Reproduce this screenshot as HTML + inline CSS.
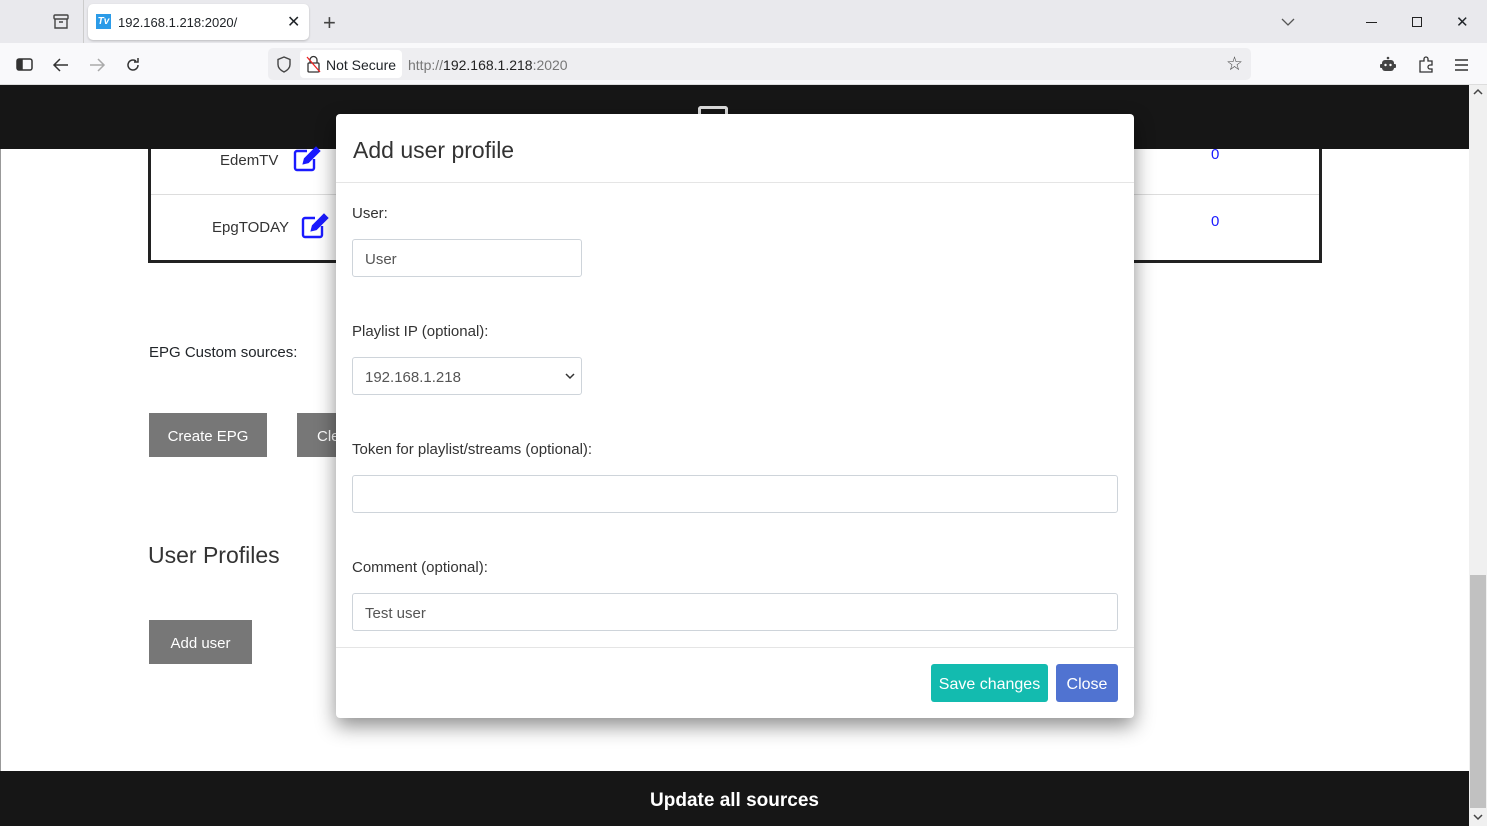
<!DOCTYPE html>
<html><head><meta charset="utf-8"><style>
*{box-sizing:border-box;margin:0;padding:0}
body{width:1487px;height:826px;overflow:hidden;position:relative;font-family:"Liberation Sans",sans-serif;background:#fff;color:#212529}
.abs{position:absolute}
.tabbar{left:0;top:0;width:1487px;height:43px;background:#e9e9ed}
.tab{left:88px;top:4px;width:221px;height:36px;background:#fff;border-radius:5px;box-shadow:0 1px 2px rgba(0,0,0,.2)}
.toolbar{left:0;top:43px;width:1487px;height:42px;background:#f9f9fb;border-bottom:1px solid #ddd}
.url{left:268px;top:48px;width:983px;height:32px;background:#eeeef1;border-radius:5px}
.ns{left:300px;top:50px;width:102px;height:28px;background:#fff;border-radius:4px}
.nav{left:0;top:85px;width:1469px;height:64px;background:#161616}
.foot{left:0;top:771px;width:1469px;height:55px;background:#161616;color:#fff;font-weight:bold;font-size:19px;text-align:center;line-height:60px}
.sb{left:1469px;top:85px;width:18px;height:741px;background:#f0f0f0}
.thumb{left:1470px;top:575px;width:16px;height:233px;background:#c1c1c1}
.modal{left:336px;top:114px;width:798px;height:604px;background:#fff;border-radius:4px;box-shadow:0 8px 20px rgba(0,0,0,.45)}
.lbl{font-size:15px;color:#333}
.inp{border:1px solid #ced4da;border-radius:3px;height:38px;font-size:15px;color:#555;padding:0 12px;line-height:40px}
.btn{color:#fff;font-size:16px;text-align:center}
</style></head><body>
<div class="abs tabbar"></div>
<svg class="abs" style="left:52px;top:13px" width="18" height="18" viewBox="0 0 18 18" fill="none" stroke="#444" stroke-width="1.4"><rect x="2" y="2" width="14" height="4" rx="1"/><path d="M3 6v9h12V6M7 9h4"/></svg>
<div class="abs" style="left:83px;top:0;width:1px;height:43px;background:#ccc"></div>
<div class="abs tab"></div>
<div class="abs" style="left:96px;top:14px;width:15px;height:15px;background:#2b9be8;color:#fff;font-size:10px;font-style:italic;font-weight:bold;text-align:center;line-height:15px">Tv</div>
<div class="abs" style="left:118px;top:15px;font-size:13px">192.168.1.218:2020/</div>
<div class="abs" style="left:287px;top:12px;font-size:16px">✕</div>
<div class="abs" style="left:323px;top:10px;font-size:22px;color:#444;font-weight:300">+</div>
<svg class="abs" style="left:1280px;top:16px" width="16" height="12"><path d="M2 3l6 6 6-6" stroke="#555" fill="none" stroke-width="1.3"/></svg>
<div class="abs" style="left:1366px;top:22px;width:11px;height:1px;background:#222"></div>
<div class="abs" style="left:1412px;top:17px;width:10px;height:10px;border:1px solid #222"></div>
<div class="abs" style="left:1456px;top:13px;font-size:15px">✕</div>
<div class="abs toolbar"></div>
<svg class="abs" style="left:16px;top:57px" width="18" height="16" fill="none" stroke="#333" stroke-width="1.5"><rect x="1" y="2" width="15" height="11" rx="2"/><rect x="2" y="3" width="4" height="9" fill="#333"/></svg>
<svg class="abs" style="left:52px;top:57px" width="18" height="16" fill="none" stroke="#333" stroke-width="1.5"><path d="M16 8H2M8 2L2 8l6 6"/></svg>
<svg class="abs" style="left:88px;top:57px" width="18" height="16" fill="none" stroke="#aaa" stroke-width="1.5"><path d="M2 8h14M10 2l6 6-6 6"/></svg>
<svg class="abs" style="left:124px;top:56px" width="18" height="18" fill="none" stroke="#333" stroke-width="1.5"><path d="M14 9a5 5 0 1 1-2-4M14 2v4h-4"/></svg>
<div class="abs url"></div>
<svg class="abs" style="left:276px;top:56px" width="16" height="17" fill="none" stroke="#444" stroke-width="1.4"><path d="M8 1L2 3.5v5C2 12 5 14.5 8 16c3-1.5 6-4 6-7.5v-5z"/></svg>
<div class="abs ns"></div>
<svg class="abs" style="left:306px;top:55px" width="15" height="18" fill="none" stroke="#333" stroke-width="1.3"><rect x="2" y="8" width="11" height="9" rx="1"/><path d="M4 8V5a3.5 3.5 0 0 1 7 0v3"/><path d="M1 2l13 15" stroke="#e22"/></svg>
<div class="abs" style="left:326px;top:57px;font-size:14px">Not Secure</div>
<div class="abs" style="left:408px;top:57px;font-size:14px;color:#777">http://<span style="color:#222">192.168.1.218</span>:2020</div>
<div class="abs" style="left:1226px;top:53px;font-size:19px;color:#444">☆</div>
<svg class="abs" style="left:1379px;top:56px" width="18" height="17"><circle cx="9" cy="2" r="1.3" fill="#444"/><rect x="3" y="4" width="12" height="11" rx="3" fill="#444"/><rect x="1" y="8" width="16" height="4" rx="1" fill="#444"/><circle cx="6.5" cy="9" r="1.2" fill="#fff"/><circle cx="11.5" cy="9" r="1.2" fill="#fff"/></svg>
<svg class="abs" style="left:1418px;top:55px" width="18" height="18" fill="none" stroke="#333" stroke-width="1.3"><path d="M2 6h4V4a2 2 0 0 1 4 0v2h4v4h-2a2 2 0 0 0 0 4h2v3H2z"/></svg>
<svg class="abs" style="left:1454px;top:58px" width="16" height="14" stroke="#333" stroke-width="1.4"><path d="M1 2h13M1 7h13M1 12h13"/></svg>

<div class="abs nav"></div>
<div class="abs" style="left:0;top:149px;width:1px;height:622px;background:#999"></div>
<div class="abs" style="left:698px;top:106px;width:30px;height:10px;border:3px solid #ddd;border-bottom:none;border-radius:3px 3px 0 0"></div>
<div class="abs" style="left:148px;top:149px;width:1174px;height:114px;border:3px solid #222;border-top:none"></div>
<div class="abs" style="left:151px;top:194px;width:1168px;height:1px;background:#ddd"></div>
<div class="abs" style="left:220px;top:152px;font-size:15px;color:#333">EdemTV</div>
<div class="abs" style="left:212px;top:219px;font-size:15px;color:#333">EpgTODAY</div>
<svg class="abs" style="left:293px;top:146px" width="28" height="26" fill="none" stroke="#1a1aff" stroke-width="2.4"><path d="M14 5H4a2 2 0 0 0-2 2v15a2 2 0 0 0 2 2h15a2 2 0 0 0 2-2V13"/><path d="M23 2l3 3-11 11-4 1 1-4z" fill="#1a1aff"/></svg>
<svg class="abs" style="left:301px;top:213px" width="28" height="26" fill="none" stroke="#1a1aff" stroke-width="2.4"><path d="M14 5H4a2 2 0 0 0-2 2v15a2 2 0 0 0 2 2h15a2 2 0 0 0 2-2V13"/><path d="M23 2l3 3-11 11-4 1 1-4z" fill="#1a1aff"/></svg>
<div class="abs" style="left:1211px;top:146px;font-size:15px;color:#1a1aff">0</div>
<div class="abs" style="left:1211px;top:213px;font-size:15px;color:#1a1aff">0</div>
<div class="abs" style="left:149px;top:344px;font-size:15px">EPG Custom sources:</div>
<div class="abs btn" style="left:149px;top:413px;width:118px;height:44px;background:#777;line-height:48px;font-size:15px">Create EPG</div>
<div class="abs btn" style="left:297px;top:413px;width:60px;height:44px;background:#777;line-height:48px;font-size:15px;text-align:left;padding-left:20px">Cle</div>
<div class="abs" style="left:148px;top:542px;font-size:23px;color:#333">User Profiles</div>
<div class="abs btn" style="left:149px;top:620px;width:103px;height:44px;background:#777;line-height:48px;font-size:15px">Add user</div>

<div class="abs modal">
 <div class="abs" style="left:17px;top:23px;font-size:23px;color:#333">Add user profile</div>
 <div class="abs" style="left:0;top:68px;width:798px;height:1px;background:#e5e5e5"></div>
 <div class="abs lbl" style="left:16px;top:91px">User:</div>
 <div class="abs inp" style="left:16px;top:125px;width:230px">User</div>
 <div class="abs lbl" style="left:16px;top:209px">Playlist IP (optional):</div>
 <div class="abs inp" style="left:16px;top:243px;width:230px">192.168.1.218<svg class="abs" style="right:6px;top:14px" width="10" height="8"><path d="M1 2l4 4 4-4" stroke="#333" fill="none" stroke-width="1.5"/></svg></div>
 <div class="abs lbl" style="left:16px;top:327px">Token for playlist/streams (optional):</div>
 <div class="abs inp" style="left:16px;top:361px;width:766px"></div>
 <div class="abs lbl" style="left:16px;top:445px">Comment (optional):</div>
 <div class="abs inp" style="left:16px;top:479px;width:766px">Test user</div>
 <div class="abs" style="left:0;top:533px;width:798px;height:1px;background:#e5e5e5"></div>
 <div class="abs btn" style="left:595px;top:550px;width:117px;height:38px;background:#13bbaf;border-radius:3px;line-height:41px">Save changes</div>
 <div class="abs btn" style="left:720px;top:550px;width:62px;height:38px;background:#5073d1;border-radius:3px;line-height:41px">Close</div>
</div>
<div class="abs foot">Update all sources</div>
<div class="abs sb"></div>
<div class="abs thumb"></div>
<svg class="abs" style="left:1472px;top:88px" width="12" height="8"><path d="M2 6l4-4 4 4" stroke="#444" fill="none" stroke-width="1.5"/></svg>
<svg class="abs" style="left:1472px;top:813px" width="12" height="8"><path d="M2 2l4 4 4-4" stroke="#444" fill="none" stroke-width="1.5"/></svg>
</body></html>
